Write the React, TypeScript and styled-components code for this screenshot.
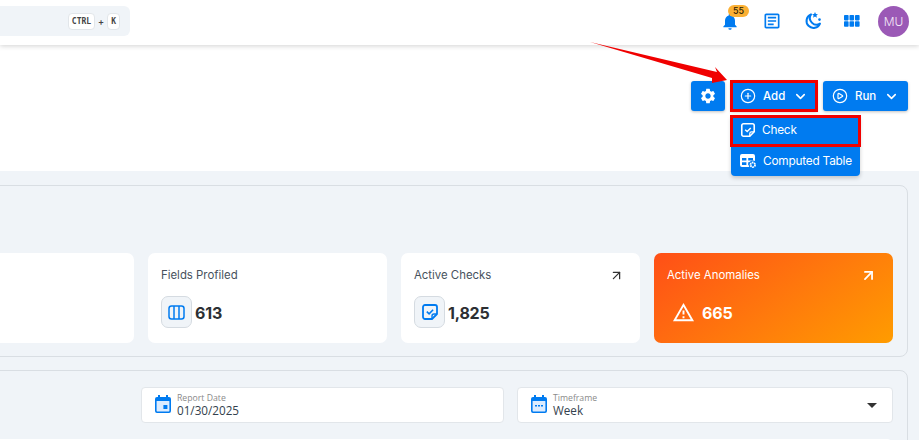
import * as React from 'react';
import styled, { createGlobalStyle } from 'styled-components';
import { ArrowUpRight, ChevronDown, CirclePlay, CirclePlus } from 'lucide-react';
import { MdNotifications, MdOutlineArticle, MdOutlineWarningAmber, MdSettings } from 'react-icons/md';

const BLUE = '#007bf0';

const GlobalStyle = createGlobalStyle`
  html, body {
    margin: 0;
    height: 100%;
    overflow: hidden;
    background: #f0f4f8;
  }
  body {
    font-family: Inter, "Liberation Sans", sans-serif;
  }
`;

const Page = styled.div`
  width: 919px;
  height: 440px;
  overflow: hidden;
  position: relative;
  background: #f0f4f8;
`;

const Header = styled.header`
  height: 45px;
  box-sizing: border-box;
  padding: 6px 10px 0 0;
  display: flex;
  justify-content: space-between;
  background: #fff;
  box-shadow: 0 1px 5px rgba(0, 0, 0, 0.18);
  position: relative;
  z-index: 1;
`;

const Search = styled.div`
  width: 130px;
  height: 30px;
  padding-right: 10px;
  box-sizing: border-box;
  background: #f0f4f8;
  border-radius: 0 6px 6px 0;
  display: flex;
  align-items: center;
  justify-content: flex-end;
  gap: 3px;
  color: #444;
  font-size: 9px;
  font-weight: 600;
`;

const Key = styled.kbd`
  height: 15px;
  padding: 0 3px;
  display: flex;
  align-items: center;
  background: #fff;
  border: 1px solid #e2e6ea;
  border-radius: 4px;
  font-family: "DejaVu Sans Mono", monospace;
  font-size: 8px;
  font-weight: 600;
  color: #444;
`;

const HeaderIcons = styled.div`
  display: flex;
  align-items: flex-start;
`;

const HeaderIcon = styled.div<{ $gap?: number }>`
  width: 20px;
  height: 20px;
  margin: 5px 0 0 ${(p) => p.$gap ?? 21}px;
  color: ${BLUE};
  display: flex;
  align-items: center;
  justify-content: center;
  position: relative;
`;

const Badge = styled.span`
  position: absolute;
  top: -6px;
  left: 8px;
  width: 21px;
  height: 12px;
  border-radius: 6px;
  background: #fbb034;
  color: #2e2206;
  font-size: 9px;
  font-weight: 500;
  line-height: 12px;
  text-align: center;
`;

const Avatar = styled.div`
  width: 31px;
  height: 31px;
  margin-left: 16px;
  border-radius: 50%;
  background: #9b59b6;
  color: #f3e8f7;
  font-size: 12px;
  font-weight: 300;
  display: flex;
  align-items: center;
  justify-content: center;
`;

const Toolbar = styled.div`
  height: 126px;
  box-sizing: border-box;
  padding: 36px 11px 0 0;
  background: #fff;
  display: flex;
  justify-content: flex-end;
  gap: 6px;
`;

const Button = styled.div<{ $width: number; $marked?: boolean; $iconOnly?: boolean }>`
  width: ${(p) => p.$width}px;
  height: 30px;
  box-sizing: border-box;
  padding-left: ${(p) => (p.$iconOnly ? 0 : 9)}px;
  background: ${BLUE};
  border-radius: ${(p) => (p.$marked ? 0 : 3)}px;
  box-shadow: 0 1px 3px rgba(0, 0, 0, 0.25);
  outline: ${(p) => (p.$marked ? '3px solid #f00000' : 'none')};
  outline-offset: -2px;
  color: #fff;
  font-size: 11.5px;
  font-weight: 500;
  display: flex;
  align-items: center;
  justify-content: ${(p) => (p.$iconOnly ? 'center' : 'flex-start')};
  gap: 7px;
`;

const ButtonLabel = styled.span`
  margin-right: 1px;
`;

const Menu = styled.div`
  position: absolute;
  top: 116px;
  left: 731px;
  width: 129px;
  height: 60px;
  background: ${BLUE};
  border-radius: 0 0 4px 4px;
  box-shadow: 0 2px 4px rgba(0, 0, 0, 0.2);
  z-index: 2;
`;

const MenuItem = styled.div<{ $marked?: boolean }>`
  height: 30px;
  box-sizing: border-box;
  padding: ${(p) => (p.$marked ? '0 0 2px 9px' : '0 0 0 9px')};
  display: flex;
  align-items: center;
  gap: 6px;
  color: #fff;
  font-size: 11.8px;
  font-weight: 400;
  letter-spacing: -0.2px;
  outline: ${(p) => (p.$marked ? '3px solid #f00000' : 'none')};
  outline-offset: -2px;
`;

const Arrow = styled.svg`
  position: absolute;
  top: 38px;
  left: 588px;
  z-index: 3;
`;

const Content = styled.main`
  padding: 14px 11px 0 0;
  display: flex;
  flex-direction: column;
  gap: 13px;
  margin-left: -120px;
`;

const Panel = styled.section<{ $height: number }>`
  height: ${(p) => p.$height}px;
  box-sizing: border-box;
  border: 1px solid #d9dee3;
  border-radius: 8px;
  padding: 0 14px;
`;

const Cards = styled.div`
  margin-top: 67px;
  display: grid;
  grid-template-columns: repeat(4, 239px);
  gap: 14px;
`;

const Card = styled.div<{ $alert?: boolean }>`
  height: 90px;
  box-sizing: border-box;
  padding: 14px 13px;
  border-radius: 7px;
  color: ${(p) => (p.$alert ? '#fff' : '#47525d')};
  background: ${(p) => (p.$alert ? 'linear-gradient(145deg, #ff4f17 0%, #ff7a0c 55%, #ff9c00 100%)' : '#fff')};
`;

const CardHead = styled.div`
  display: flex;
  justify-content: space-between;
  align-items: center;
  height: 16px;
  font-size: 11.4px;
  font-weight: 400;
`;

const HeadArrow = styled.span<{ $alert?: boolean }>`
  display: flex;
  margin-right: 3px;
  color: ${(p) => (p.$alert ? '#fff' : '#333')};
`;

const CardBody = styled.div`
  margin-top: 13px;
  display: flex;
  align-items: center;
  gap: 3px;
`;

const IconTile = styled.div`
  width: 31px;
  height: 32px;
  box-sizing: border-box;
  background: #f0f4f8;
  border: 1px solid #d5dbe1;
  border-radius: 7px;
  color: ${BLUE};
  display: flex;
  align-items: center;
  justify-content: center;
`;

const AlertIcon = styled.div`
  width: 32px;
  height: 32px;
  display: flex;
  align-items: center;
  justify-content: center;
`;

const Value = styled.span<{ $alert?: boolean }>`
  padding-top: 2px;
  font-size: 16px;
  font-weight: 700;
  letter-spacing: -0.2px;
  color: ${(p) => (p.$alert ? '#fff' : '#2c2f33')};
`;

const Filters = styled.div`
  margin-top: 16px;
  display: grid;
  grid-template-columns: 363px 376px;
  gap: 13px;
  justify-content: end;
`;

const Field = styled.div`
  height: 36px;
  box-sizing: border-box;
  padding: 0 13px;
  background: #fff;
  border: 1px solid #e2e6ea;
  border-radius: 4px;
  display: flex;
  align-items: center;
  gap: 6px;
`;

const FieldIcon = styled.span`
  display: flex;
  margin-bottom: 2px;
`;

const FieldText = styled.div`
  flex: 1;
  display: flex;
  flex-direction: column;
  margin-top: 1px;
`;

const FieldLabel = styled.span`
  font-family: "Open Sans", sans-serif;
  font-size: 8.7px;
  line-height: 10px;
  color: #8a8a8a;
`;

const FieldValue = styled.span`
  font-family: "Open Sans", sans-serif;
  font-size: 11.7px;
  line-height: 15px;
  color: #333f4d;
`;

const Caret = styled.span`
  width: 0;
  height: 0;
  margin-right: 2px;
  border-left: 5px solid transparent;
  border-right: 5px solid transparent;
  border-top: 5px solid #333;
`;

const SheetEdge = styled.div`
  margin-top: 16px;
  height: 20px;
  background: #fff;
  border-radius: 6px;
`;

const MoonIcon = () => (
  <svg width="20" height="20" viewBox="0 0 20 20" fill="none">
    <path d="M8 3.4a7 7 0 1 0 9 9.2 6.6 6.6 0 0 1-9-9.2z" stroke="currentColor" strokeWidth="2" strokeLinejoin="round" />
    <path d="M12 1l.9 2 2.1.2-1.6 1.4.5 2.1-1.9-1.1-1.9 1.1.5-2.1L9 3.2l2.1-.2z" fill="currentColor" />
    <circle cx="16.5" cy="8.6" r="1.3" fill="currentColor" />
  </svg>
);

const AppsIcon = () => (
  <svg width="16" height="12" viewBox="0 0 16 12" fill="currentColor">
    {[0, 5.5, 11].map((x) =>
      [0, 6.3].map((y) => <rect key={`${x}-${y}`} x={x} y={y} width="4.6" height="5.4" rx="0.8" />),
    )}
  </svg>
);

const NoteCheckIcon = ({ size }: { size: number }) => (
  <svg width={size} height={size} viewBox="0 0 18 18" fill="none" stroke="currentColor">
    <path d="M4 2h10a2 2 0 0 1 2 2v7l-5 5H4a2 2 0 0 1-2-2V4a2 2 0 0 1 2-2z" strokeWidth="1.8" strokeLinejoin="round" />
    <path d="M16 11h-3a2 2 0 0 0-2 2v3" strokeWidth="1.4" />
    <path d="M5.8 8.6l2.3 2.2 4-4" strokeWidth="1.6" />
  </svg>
);

const ColumnsIcon = () => (
  <svg width="17" height="15" viewBox="0 0 17 15" fill="none" stroke="currentColor" strokeWidth="1.5">
    <rect x="1" y="1" width="15" height="13" rx="2.5" />
    <path d="M6 1v13M11 1v13" />
  </svg>
);

const TableGearIcon = () => (
  <svg width="17" height="16" viewBox="0 0 17 16">
    <path
      fillRule="evenodd"
      fill="#fff"
      d="M2 1h11a2 2 0 0 1 2 2v9a2 2 0 0 1-2 2H2a2 2 0 0 1-2-2V3a2 2 0 0 1 2-2zM2 5v2.4h4.4V5zM8.2 5v2.4h4.8V5zM2 9.2V12h4.4V9.2zM8.2 9.2V12H13V9.2z"
    />
    <circle cx="12.8" cy="11.8" r="4.2" fill={BLUE} />
    <circle cx="12.8" cy="11.8" r="2.3" fill="none" stroke="#fff" strokeWidth="1.8" strokeDasharray="1.6 .6" />
  </svg>
);

const CalendarIcon = ({ week }: { week?: boolean }) => (
  <svg width="16" height="18" viewBox="0 0 16 18">
    <path d="M3 0h2v2h6V0h2v2h1a2 2 0 0 1 2 2v12a2 2 0 0 1-2 2H2a2 2 0 0 1-2-2V4a2 2 0 0 1 2-2h1z" fill={BLUE} />
    <rect x="1.6" y="6" width="12.8" height="10.4" rx="0.6" fill="#dcecff" />
    {week ? (
      <path d="M4 10h2v1.6H4zM7 10h2v1.6H7zM10 10h2v1.6h-2z" fill={BLUE} />
    ) : (
      <rect x="8.4" y="10" width="4" height="4" fill={BLUE} />
    )}
  </svg>
);

export default function App() {
  return (
    <Page>
      <GlobalStyle />
      <Header>
        <Search>
          <Key>CTRL</Key>+<Key>K</Key>
        </Search>
        <HeaderIcons>
          <HeaderIcon>
            <MdNotifications size={23} />
            <Badge>55</Badge>
          </HeaderIcon>
          <HeaderIcon $gap={22}>
            <MdOutlineArticle size={20} />
          </HeaderIcon>
          <HeaderIcon>
            <MoonIcon />
          </HeaderIcon>
          <HeaderIcon $gap={19}>
            <AppsIcon />
          </HeaderIcon>
          <Avatar>MU</Avatar>
        </HeaderIcons>
      </Header>

      <Toolbar>
        <Button $width={34} $iconOnly>
          <MdSettings size={18} />
        </Button>
        <Button $width={86} $marked>
          <CirclePlus size={16} strokeWidth={1.8} />
          <ButtonLabel>Add</ButtonLabel>
          <ChevronDown size={15} strokeWidth={2.5} />
        </Button>
        <Button $width={85}>
          <CirclePlay size={16} strokeWidth={1.8} />
          <ButtonLabel>Run</ButtonLabel>
          <ChevronDown size={15} strokeWidth={2.5} />
        </Button>
      </Toolbar>

      <Menu>
        <MenuItem $marked>
          <NoteCheckIcon size={16} />
          Check
        </MenuItem>
        <MenuItem>
          <TableGearIcon />
          Computed Table
        </MenuItem>
      </Menu>

      <Arrow width="150" height="50" viewBox="0 0 150 50">
        <polygon points="2,4 129,34 127,29 139,42 124,45 124,40" fill="#f00000" />
      </Arrow>

      <Content>
        <Panel $height={172}>
          <Cards>
            <Card />
            <Card>
              <CardHead>Fields Profiled</CardHead>
              <CardBody>
                <IconTile>
                  <ColumnsIcon />
                </IconTile>
                <Value>613</Value>
              </CardBody>
            </Card>
            <Card>
              <CardHead>
                Active Checks
                <HeadArrow>
                  <ArrowUpRight size={15} />
                </HeadArrow>
              </CardHead>
              <CardBody>
                <IconTile>
                  <NoteCheckIcon size={18} />
                </IconTile>
                <Value>1,825</Value>
              </CardBody>
            </Card>
            <Card $alert>
              <CardHead>
                Active Anomalies
                <HeadArrow $alert>
                  <ArrowUpRight size={17} strokeWidth={2.5} />
                </HeadArrow>
              </CardHead>
              <CardBody>
                <AlertIcon>
                  <MdOutlineWarningAmber size={23} />
                </AlertIcon>
                <Value $alert>665</Value>
              </CardBody>
            </Card>
          </Cards>
        </Panel>
        <Panel $height={100}>
          <Filters>
            <Field>
              <FieldIcon>
                <CalendarIcon />
              </FieldIcon>
              <FieldText>
                <FieldLabel>Report Date</FieldLabel>
                <FieldValue>01/30/2025</FieldValue>
              </FieldText>
            </Field>
            <Field>
              <FieldIcon>
                <CalendarIcon week />
              </FieldIcon>
              <FieldText>
                <FieldLabel>Timeframe</FieldLabel>
                <FieldValue>Week</FieldValue>
              </FieldText>
              <Caret />
            </Field>
          </Filters>
          <SheetEdge />
        </Panel>
      </Content>
    </Page>
  );
}
